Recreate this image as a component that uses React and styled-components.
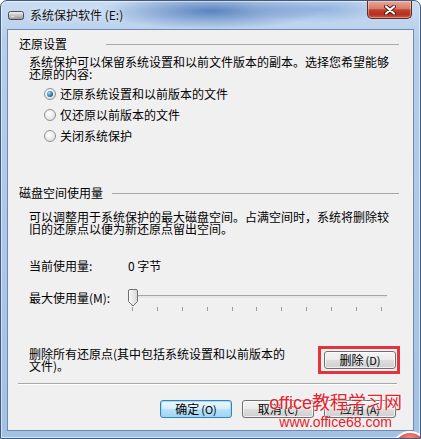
import React from 'react';
import styled, { createGlobalStyle } from 'styled-components';

const GlobalStyle = createGlobalStyle`
  html, body {
    margin: 0;
    padding: 0;
    background: #ffffff;
  }
  body {
    font-family: "Noto Sans CJK SC", "Liberation Sans", sans-serif;
    font-size: 12px;
    color: #000;
  }
`;

const Window = styled.div`
  position: relative;
  box-sizing: border-box;
  width: 421px;
  height: 439px;
  display: flex;
  flex-direction: column;
  border: 1px solid #3d5a80;
  border-radius: 7px 7px 0 0;
  overflow: hidden;
  background:
    radial-gradient(ellipse 110px 18px at 210px 10px, rgba(45, 95, 170, 0.7), rgba(45, 95, 170, 0)),
    radial-gradient(ellipse 70px 14px at 320px 8px, rgba(80, 130, 200, 0.45), rgba(80, 130, 200, 0)),
    linear-gradient(180deg, #cadcf2 0%, #b5ceec 40px, #a3c0e5 100%);
  box-shadow: inset 0 0 0 1px rgba(255, 255, 255, 0.55);
`;

const TitleBar = styled.div`
  height: 28px;
  flex: none;
  display: flex;
  align-items: center;
  padding-left: 7px;
`;

const TitleText = styled.span`
  margin-left: 6px;
  font-size: 12px;
  line-height: 16px;
  color: #111;
  text-shadow: 0 0 6px rgba(255, 255, 255, 0.9);
`;

const CloseButton = styled.div`
  align-self: flex-start;
  margin-left: auto;
  margin-right: 8px;
  box-sizing: border-box;
  width: 45px;
  height: 18px;
  display: flex;
  align-items: center;
  justify-content: center;
  border: 1px solid #5e2a23;
  border-top: none;
  border-radius: 0 0 5px 5px;
  background: linear-gradient(180deg, #e9a89a 0%, #d87a68 45%, #c4412f 52%, #b5301e 80%, #d25a40 100%);
  box-shadow: inset 0 0 0 1px rgba(255, 255, 255, 0.35);
`;

const Client = styled.div`
  flex: 1;
  margin: 0 6px 7px;
  box-sizing: border-box;
  border: 1px solid #6f8bb0;
  background: #f0f0f0;
  display: flex;
  flex-direction: column;
  padding: 7px 14px 0 11px;
`;

const GroupHeader = styled.div`
  display: flex;
  align-items: center;
  height: 14px;
  margin-top: ${p => p.$top || 0}px;
`;

const GroupLabel = styled.span`
  width: ${p => p.$width}px;
  flex: none;
  line-height: 14px;
`;

const GroupLine = styled.div`
  flex: 1;
  height: 1px;
  background: #a8a8a8;
`;

const Body = styled.div`
  padding-left: 10px;
  display: flex;
  flex-direction: column;
`;

const Para = styled.p`
  margin: ${p => p.$top || 0}px 0 0;
  line-height: 12px;
`;

const RadioList = styled.div`
  margin-top: 3px;
  padding-left: 15px;
  display: flex;
  flex-direction: column;
`;

const RadioRow = styled.label`
  height: 21px;
  display: flex;
  align-items: center;
  gap: 4px;
`;

const RadioDot = styled.span`
  box-sizing: border-box;
  width: 12px;
  height: 12px;
  border-radius: 50%;
  border: 1px solid #8e9092;
  background: radial-gradient(circle at 40% 35%, #ffffff, #e6e6e6 65%, #cfcfcf);
  display: inline-flex;
  align-items: center;
  justify-content: center;

  &::after {
    content: '';
    display: ${p => (p.$checked ? 'block' : 'none')};
    width: 6px;
    height: 6px;
    border-radius: 50%;
    background: radial-gradient(circle at 35% 35%, #a8dcf5, #2a78b0 55%, #0f3f66);
  }
`;

const InfoRow = styled.div`
  display: flex;
  align-items: ${p => p.$align || 'center'};
  margin-top: ${p => p.$top}px;
  min-height: 16px;
`;

const InfoLabel = styled.span`
  width: 99px;
  flex: none;
  line-height: 16px;
  margin-top: ${p => p.$top || 0}px;
`;

const Slider = styled.div`
  position: relative;
  width: 260px;
  height: 25px;
  display: flex;
  flex-direction: column;
`;

const Thumb = styled.svg`
  position: absolute;
  left: 0;
  top: 0;
`;

const Track = styled.div`
  margin: 6px 0 0 9px;
  width: 250px;
  height: 2px;
  border-top: 1px solid #a5a5a5;
  background: #e4e6e8;
`;

const Ticks = styled.div`
  margin: 9px 0 0 4px;
  width: 250px;
  display: flex;
  justify-content: space-between;
`;

const Tick = styled.span`
  width: 1px;
  height: 4px;
  background: #9c9c9c;
`;

const DeleteRow = styled.div`
  display: flex;
  justify-content: space-between;
  align-items: flex-start;
  margin-top: 32px;
  margin-right: -1px;
`;

const Highlight = styled.div`
  border: 3px solid #e2343c;
  padding: 2px 1px 2px 3px;
  display: flex;
`;

const Separator = styled.div`
  height: 1px;
  margin: 9px 2px 0 -1px;
  background: #a8a8a8;
  box-shadow: 0 1px 0 #ffffff;
`;

const ButtonRow = styled.div`
  display: flex;
  justify-content: flex-end;
  gap: 10px;
  margin: 16px 3px 0 0;
`;

const Button = styled.button`
  box-sizing: border-box;
  width: 72px;
  height: 18px;
  padding: 0;
  font-family: "Noto Sans CJK SC", "Liberation Sans", sans-serif;
  font-size: 12px;
  line-height: 16px;
  color: #000;
  border: 1px solid ${p => (p.$primary ? '#3c7fb1' : '#707070')};
  border-radius: 3px;
  background: ${p =>
    p.$primary
      ? 'linear-gradient(180deg, #eaf6fd 0%, #d6eefb 48%, #b8e2f8 52%, #9fd4f2 100%)'
      : 'linear-gradient(180deg, #f4f4f4 0%, #ebebeb 48%, #dddddd 52%, #cfcfcf 100%)'};
  box-shadow: inset 0 0 0 1px ${p => (p.$primary ? 'rgba(150, 220, 250, 0.9)' : 'rgba(255, 255, 255, 0.7)')};
`;

const Key = styled.span`
  font-size: 11px;
  margin-left: 2px;
`;

const Watermark = styled.div`
  position: absolute;
  right: 18px;
  top: 391px;
  display: flex;
  flex-direction: column;
  align-items: center;
  color: #e8202b;
  pointer-events: none;
`;

const WatermarkTitle = styled.span`
  font-family: "Liberation Sans", "Noto Sans CJK SC", sans-serif;
  font-size: 18px;
  line-height: 22px;
  text-shadow: 0 0 2px #fff, 0 0 2px #fff;
`;

const WatermarkUrl = styled.span`
  font-family: "Liberation Sans", sans-serif;
  font-size: 14px;
  line-height: 14px;
  margin-top: 1px;
`;

const Badge = styled.div`
  position: absolute;
  left: 391px;
  top: 430px;
  width: 36px;
  height: 36px;
  box-sizing: border-box;
  border-radius: 50%;
  border: 2px solid #ffffff;
  background: radial-gradient(circle at 50% 25%, #f59a90, #d8322c 55%, #a3151a);
`;

const DriveIcon = () => (
  <svg width="16" height="9" viewBox="0 0 16 9">
    <defs>
      <linearGradient id="drive" x1="0" y1="0" x2="0" y2="1">
        <stop offset="0" stopColor="#f6f6f6" />
        <stop offset="1" stopColor="#8f8f8f" />
      </linearGradient>
    </defs>
    <rect x="0.5" y="0.5" width="15" height="8" rx="2" fill="url(#drive)" stroke="#4c4c4c" />
    <rect x="2.5" y="5" width="4" height="1.5" fill="#d8d8d8" />
  </svg>
);

const CloseGlyph = () => (
  <svg width="12" height="10" viewBox="0 0 12 10">
    <path d="M2 1.5 L10 8.5 M10 1.5 L2 8.5" stroke="#4a1a14" strokeWidth="4" strokeLinecap="round" />
    <path d="M2 1.5 L10 8.5 M10 1.5 L2 8.5" stroke="#ffffff" strokeWidth="2.2" strokeLinecap="round" />
  </svg>
);

const options = [
  { id: 'all', text: '还原系统设置和以前版本的文件', checked: true },
  { id: 'files', text: '仅还原以前版本的文件' },
  { id: 'off', text: '关闭系统保护' },
];

const tickCount = 11;

function App() {
  return (
    <>
      <GlobalStyle />
      <Window>
        <TitleBar>
          <DriveIcon />
          <TitleText>系统保护软件 (E:)</TitleText>
          <CloseButton>
            <CloseGlyph />
          </CloseButton>
        </TitleBar>

        <Client>
          <GroupHeader>
            <GroupLabel $width={87}>还原设置</GroupLabel>
            <GroupLine />
          </GroupHeader>
          <Body>
            <Para $top={5}>
              系统保护可以保留系统设置和以前文件版本的副本。选择您希望能够
              <br />
              还原的内容:
            </Para>
            <RadioList>
              {options.map(o => (
                <RadioRow key={o.id}>
                  <RadioDot $checked={o.checked} />
                  {o.text}
                </RadioRow>
              ))}
            </RadioList>
          </Body>

          <GroupHeader $top={40}>
            <GroupLabel $width={93}>磁盘空间使用量</GroupLabel>
            <GroupLine />
          </GroupHeader>
          <Body>
            <Para $top={11}>
              可以调整用于系统保护的最大磁盘空间。占满空间时，系统将删除较
              <br />
              旧的还原点以便为新还原点留出空间。
            </Para>
            <InfoRow $top={22}>
              <InfoLabel>当前使用量:</InfoLabel>
              <span>0 字节</span>
            </InfoRow>
            <InfoRow $top={15} $align="flex-start">
              <InfoLabel $top={1}>最大使用量(M):</InfoLabel>
              <Slider>
                <Thumb width="10" height="18" viewBox="0 0 10 18">
                  <defs>
                    <linearGradient id="thumb" x1="0" y1="0" x2="1" y2="0">
                      <stop offset="0" stopColor="#fbfbfb" />
                      <stop offset="1" stopColor="#d6d6d6" />
                    </linearGradient>
                  </defs>
                  <path
                    d="M0.5 2 Q0.5 0.5 2 0.5 H8 Q9.5 0.5 9.5 2 V12.5 L5 17 L0.5 12.5 Z"
                    fill="url(#thumb)"
                    stroke="#6f6f6f"
                  />
                </Thumb>
                <Track />
                <Ticks>
                  {Array.from({ length: tickCount }, (_, i) => (
                    <Tick key={i} />
                  ))}
                </Ticks>
              </Slider>
            </InfoRow>
            <DeleteRow>
              <Para $top={2}>
                删除所有还原点(其中包括系统设置和以前版本的
                <br />
                文件)。
              </Para>
              <Highlight>
                <Button>
                  删除<Key>(D)</Key>
                </Button>
              </Highlight>
            </DeleteRow>
          </Body>

          <Separator />

          <ButtonRow>
            <Button $primary>
              确定<Key>(O)</Key>
            </Button>
            <Button>
              取消<Key>(C)</Key>
            </Button>
            <Button>
              应用<Key>(A)</Key>
            </Button>
          </ButtonRow>
        </Client>

        <Watermark>
          <WatermarkTitle>office教程学习网</WatermarkTitle>
          <WatermarkUrl>www.office68.com</WatermarkUrl>
        </Watermark>
        <Badge />
      </Window>
    </>
  );
}

export default App;
